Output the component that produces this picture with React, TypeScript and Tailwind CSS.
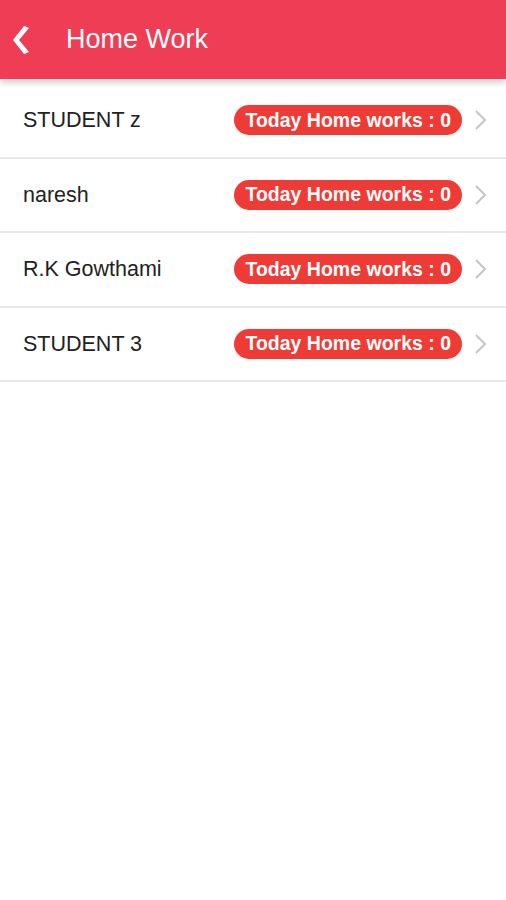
const students = ["STUDENT z", "naresh", "R.K Gowthami", "STUDENT 3"]

const BackIcon = () => (
  <svg width="20" height="30" viewBox="0 0 20 30" className="shrink-0">
    <polygon points="14,1 19,3 9,15 19,27 14,29 3,15" fill="#ffffff" />
  </svg>
)

const RowChevron = () => (
  <svg width="14" height="24" viewBox="0 0 14 24" className="ml-[12px] shrink-0">
    <polyline points="2,3 11,12 2,21" fill="none" stroke="#c6c6c6" strokeWidth="2" />
  </svg>
)

export default function App() {
  return (
    <div className="w-[506px] h-[900px] bg-white overflow-hidden" style={{ fontFamily: '"Liberation Sans", Arial, sans-serif' }}>
      {/* Header */}
      <div className="relative z-10 h-[79px] bg-[#ee3d55] flex items-center pl-[10px] shadow-[0_4px_6px_rgba(0,0,0,0.18)]">
        <BackIcon />
        <h1 className="ml-[36px] text-[27px] font-normal text-white">Home Work</h1>
      </div>

      {/* List */}
      <div className="pt-[5px]">
        {students.map(name => (
          <div key={name}
            className="h-[74.5px] flex items-center border-b-2 border-[#e8e8e8] pl-[23px] pr-[18px]">
            <span className="flex-1 text-[21.5px] text-[#222222] truncate">{name}</span>
            <span className="h-[30px] px-[11px] rounded-full bg-[#ee3b36] flex items-center text-white text-[19.5px] font-bold">
              Today Home works : 0
            </span>
            <RowChevron />
          </div>
        ))}
      </div>
    </div>
  )
}
